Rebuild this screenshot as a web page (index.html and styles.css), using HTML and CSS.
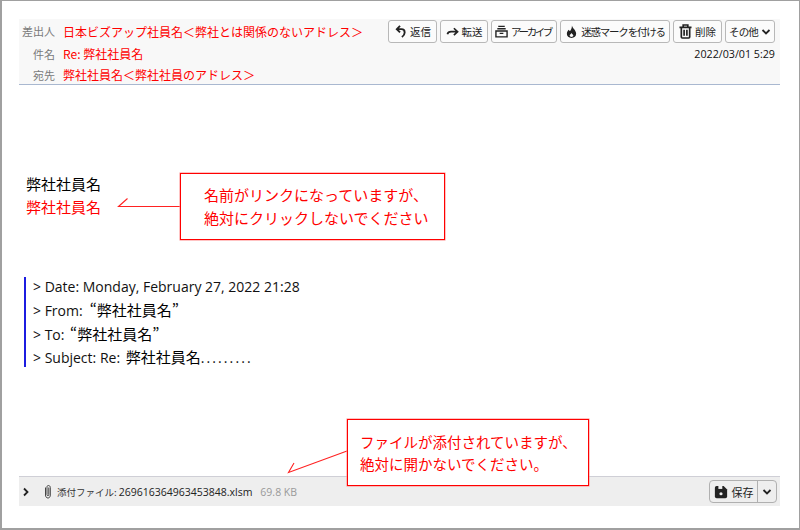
FILE: index.html
```html
<!DOCTYPE html>
<html lang="ja">
<head>
<meta charset="utf-8">
<title>メール</title>
<link rel="stylesheet" href="styles.css">
</head>
<body>
<div class="frame">
  <header class="head">
    <div class="head-fields">
      <div class="field from"><span class="label">差出人</span><span class="val">日本ビズアップ社員名＜弊社とは関係のないアドレス＞</span></div>
      <div class="field subj"><span class="label">件名</span><span class="val">Re: 弊社社員名</span></div>
      <div class="field to"><span class="label">宛先</span><span class="val">弊社社員名＜弊社社員のアドレス＞</span></div>
    </div>
    <div class="head-side">
      <div class="toolbar">
        <button class="btn w-reply"><svg class="ic" viewBox="0 0 14 14"><path d="M6.500 1 L3 4.500 L6.500 8 M3.500 4.500 H8 C10.200 4.500 11.500 6 11.500 8 C11.500 10 10.500 11.500 8.500 13" fill="none" stroke="#222" stroke-width="2"/></svg>返信</button>
        <button class="btn w-fwd"><svg class="ic" viewBox="0 0 14 14"><path d="M1.500 10 C2 8 3.500 7.200 5.500 7.200 H12 M8.500 3.500 L12.500 7.200 L8.500 11" fill="none" stroke="#222" stroke-width="1.800"/></svg>転送</button>
        <button class="btn w-arch"><svg class="ic" viewBox="0 0 14 14"><path d="M3.500 1.500 H10.500 M2.500 4 H11.500 M1 6.500 H13 V12.800 H1 Z M5 9 H9" fill="none" stroke="#222" stroke-width="1.500"/></svg><span class="tight-k">アーカイブ</span></button>
        <button class="btn w-junk"><svg class="ic" viewBox="0 0 14 14"><path d="M7.500 0.500 C8 3.500 12 5.500 12 9.500 C12 12 10 14 7 14 C4 14 2 12 2 9.500 C2 7.500 3 6 4 5 C4.500 6 5 6.500 5.500 6.500 C6.500 5 7.500 3 7.500 0.500 Z M7 8.500 C6 10 5 10.500 5 11.300 C5 12.300 6 12.800 7 12.800 C8 12.800 9 12.300 9 11.300 C9 10.500 8 10 7 8.500 Z" fill="#222" fill-rule="evenodd"/></svg><span class="tight-j">迷惑マークを付ける</span></button>
        <button class="btn w-del"><svg class="ic ic-big" viewBox="0 0 14 16"><path d="M0.500 3.500 H13.500 M4.500 3 V1 H9.500 V3 M2.500 4 V14 Q2.500 15 3.500 15 H10.500 Q11.500 15 11.500 14 V4 M5.500 6 V12.500 M8.500 6 V12.500" fill="none" stroke="#222" stroke-width="1.800"/></svg>削除</button>
        <button class="btn w-more"><span class="tight-m">その他</span><svg class="chev" viewBox="0 0 10 10"><path d="M1.500 3 L5 6.500 L8.500 3" fill="none" stroke="#222" stroke-width="1.800"/></svg></button>
      </div>
      <div class="date">2022/03/01 5:29</div>
    </div>
  </header>

  <main class="body">
    <p class="sig">弊社社員名</p>
    <p class="sig red">弊社社員名</p>
    <blockquote class="quote">
      <p>&gt; Date: Monday, February 27, 2022 21:28</p>
      <p>&gt; From: <span class="jp">&nbsp;“弊社社員名”</span></p>
      <p>&gt; To: <span class="jp shift">“弊社社員名”</span></p>
      <p>&gt; Subject: Re: <span class="jp shift">弊社社員名</span><span class="dots">.........</span></p>
    </blockquote>
  </main>

  <footer class="attach">
    <svg class="toggle" viewBox="0 0 8 10"><path d="M2 1.500 L5.500 5 L2 8.500" fill="none" stroke="#222" stroke-width="1.800"/></svg>
    <svg class="clip" viewBox="0 0 8 15"><path d="M4.800 3.500 V10.500 C4.800 11.300 4.500 11.800 4 11.800 C3.500 11.800 3 11.300 3 10.500 V3.200 C3 2 3.500 1.500 4.300 1.500 C5.500 1.500 6.300 2.300 6.300 3.500 V11 C6.300 13 5.300 14 4 14 C2.700 14 1.500 13 1.500 11 V3.500" fill="none" stroke="#444" stroke-width="1"/></svg>
    <span class="att-label">添付ファイル:</span>
    <span class="att-name">269616364963453848.xlsm</span>
    <span class="att-size">69.8 KB</span>
    <div class="save">
      <button class="save-main"><svg class="ic-save" viewBox="0 0 16 16"><path d="M3 1 H11 L15 5 V13 A2 2 0 0 1 13 15 H3 A2 2 0 0 1 1 13 V3 A2 2 0 0 1 3 1 Z" fill="#222"/><path d="M5 1 H9.500 V4.500 H5 Z" fill="#eee"/><circle cx="8" cy="10" r="1.800" fill="#eee"/></svg>保存</button>
      <button class="save-more"><svg class="chev" viewBox="0 0 10 10"><path d="M1.500 3 L5 6.500 L8.500 3" fill="none" stroke="#222" stroke-width="1.800"/></svg></button>
    </div>
  </footer>

  <svg class="arrows" viewBox="0 0 800 530">
    <path d="M180 206.500 H118.500 L127.500 198.500 M347 451 L288.500 472.500 L294 463" fill="none" stroke="#f22" stroke-width="1.100"/>
  </svg>
  <div class="note note-link">名前がリンクになっていますが、<br>絶対にクリックしないでください</div>
  <div class="note note-file">ファイルが添付されていますが、<br>絶対に開かないでください。</div>
</div>
</body>
</html>
```

FILE: styles.css
```css
* { box-sizing: border-box; }
html, body { margin: 0; padding: 0; }
body {
  width: 800px;
  height: 530px;
  background: #fff;
  overflow: hidden;
  font-family: "Open Sans", "Noto Sans CJK JP", sans-serif;
  color: #000;
}
.frame {
  position: relative;
  width: 800px;
  height: 530px;
  border: 1px solid #a0a0a0;
  border-width: 1px 1px 2px 2px;
  padding: 18px 19px 22px 17px;
  display: flex;
  flex-direction: column;
}
p { margin: 0; }

.head {
  height: 66px;
  background: #f8f8f8;
  border-bottom: 1px solid #a9b8d0;
  display: flex;
  justify-content: space-between;
  flex: none;
}
.head-fields { padding: 1px 0 0 3px; white-space: nowrap; }
.field { display: flex; align-items: center; }
.from { height: 22px; }
.subj { height: 23px; }
.to { height: 19px; }
.label {
  width: 33px;
  margin-right: 8px;
  text-align: right;
  font: 11px "Noto Sans CJK JP", sans-serif;
  color: #7a7a7a;
}
.val { font: 12px "Noto Sans CJK JP", sans-serif; color: #f00; }

.head-side { display: flex; flex-direction: column; align-items: flex-end; padding: 1px 5px 0 0; }
.toolbar { display: flex; gap: 3px; }
.btn {
  height: 23px;
  padding: 0;
  display: flex;
  align-items: center;
  justify-content: center;
  gap: 3px;
  white-space: nowrap;
  background: #fbfbfb;
  border: 1px solid #b8b8b8;
  border-radius: 3px;
  font: 10.5px "Noto Sans CJK JP", sans-serif;
  color: #222;
}
.ic { width: 13px; height: 13px; flex: none; }
.ic-big { width: 13px; height: 15px; }
.chev { width: 10px; height: 10px; flex: none; }
.tight-k { letter-spacing: -2.4px; margin-right: 2px; }
.tight-j { letter-spacing: -1.2px; }
.tight-m { letter-spacing: -0.8px; }
.w-reply { width: 49px; }
.w-fwd { width: 48px; }
.w-arch { width: 66px; }
.w-junk { width: 110px; }
.w-del { width: 49px; }
.w-more { width: 50px; gap: 3px; }
.date { margin-top: 4px; font: 10.7px/14px "Open Sans", sans-serif; color: #111; }

.body { flex: 1; position: relative; padding: 87px 0 0 7px; }
.sig { font: 15px/23px "Noto Sans CJK JP", sans-serif; }
.red { color: #f00; }
.quote {
  margin: 59px 0 0 -2px;
  padding: 0 0 0 7px;
  border-left: 2px solid #1c1ce0;
  width: 330px;
  height: 90px;
  display: flex;
  flex-direction: column;
  gap: 3.4px;
  font: 14px/20px "Open Sans", "Noto Sans CJK JP", sans-serif;
  color: #111;
}
.quote p { white-space: nowrap; height: 20px; }
.jp { font-family: "Noto Sans CJK JP", sans-serif; font-size: 15px; line-height: 20px; color: #000; }
.shift { margin-left: 2px; }
.dots { letter-spacing: 2.1px; }

.attach {
  height: 30px;
  flex: none;
  background: #eeeeee;
  border-top: 1px solid #cfcfd6;
  display: flex;
  align-items: center;
  padding-left: 3px;
}
.toggle { width: 8px; height: 10px; flex: none; }
.clip { width: 8px; height: 15px; margin-left: 14px; flex: none; }
.att-label { margin-left: 5px; font: 9.5px "Noto Sans CJK JP", sans-serif; color: #333; }
.att-name { margin-left: 2px; padding-top: 1px; font: 10.5px "Open Sans", sans-serif; color: #222; }
.att-size { margin-left: 8px; padding-top: 1px; font: 10.5px "Open Sans", sans-serif; color: #999; }
.save {
  margin-left: auto;
  margin-right: 3px;
  display: flex;
  height: 23px;
  border: 1px solid #b0b0b0;
  border-radius: 4px;
}
.save-main, .save-more {
  background: transparent;
  border: 0;
  padding: 0;
  display: flex;
  align-items: center;
  justify-content: center;
  font: 11px "Noto Sans CJK JP", sans-serif;
  color: #222;
}
.save-main { width: 48px; gap: 4px; border-right: 1px solid #b0b0b0; }
.save-more { width: 18px; }
.ic-save { width: 14px; height: 14px; flex: none; }

.arrows { position: absolute; left: -2px; top: -1px; width: 800px; height: 530px; pointer-events: none; }
.note {
  position: absolute;
  background: #fff;
  border: 1px solid #f00;
  box-shadow: 0 0 0 0.5px #f88;
  color: #f00;
  white-space: nowrap;
}
.note-link {
  left: 178px;
  top: 172px;
  width: 265px;
  height: 67px;
  padding: 9px 0 0 23px;
  font: 15px/23px "Noto Sans CJK JP", sans-serif;
}
.note-file {
  left: 345px;
  top: 418px;
  width: 242px;
  height: 67px;
  padding: 11px 0 0 12px;
  font: 14.5px/22px "Noto Sans CJK JP", sans-serif;
}
```
